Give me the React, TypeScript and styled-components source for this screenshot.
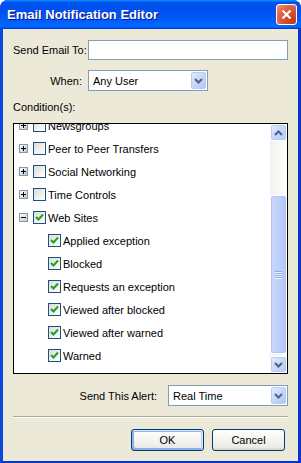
import React from 'react';
import styled, {createGlobalStyle} from 'styled-components';

const GlobalStyle = createGlobalStyle`
  html, body {
    margin: 0;
    padding: 0;
    background: #fff;
  }
  body {
    font-family: "Liberation Sans", Arial, sans-serif;
    font-size: 11px;
    color: #000;
  }
`

const Window = styled.div`
  width: 301px;
  height: 463px;
  display: flex;
  flex-direction: column;
  border-radius: 8px 8px 0 0;
  overflow: hidden;
  background: #0831d9;
`

const TitleBar = styled.div`
  height: 29px;
  flex: none;
  display: flex;
  align-items: center;
  justify-content: space-between;
  padding: 0 4px 0 7px;
  background: linear-gradient(180deg, #0997ff, #0053ee 8%, #0050ee 40%, #0066ff 88%, #0066ff 93%, #005bff 95%, #003dd7 96%, #003dd7);
`

const Title = styled.div`
  font-family: "Liberation Sans", Arial, sans-serif;
  font-weight: bold;
  font-size: 13px;
  color: #fff;
  text-shadow: 1px 1px #0f1089;
`

const CloseButton = styled.div`
  width: 21px;
  height: 21px;
  box-sizing: border-box;
  border: 1px solid #fff;
  border-radius: 3px;
  display: flex;
  align-items: center;
  justify-content: center;
  background: radial-gradient(circle at 85% 85%, #c23a14 0%, #d85532 45%, #e4704f 75%, #f09a80 100%);
`

const Frame = styled.div`
  flex: 1;
  display: flex;
  border: 3px solid #0736c8;
  border-top: none;
  border-left-color: #0b47dc;
`

const Body = styled.div`
  flex: 1;
  display: flex;
  flex-direction: column;
  background: #ece9d8;
  padding: 11px 10px 10px;
`

const FieldGrid = styled.div`
  display: grid;
  grid-template-columns: 69px 1fr;
  column-gap: 6px;
  row-gap: 10px;
  align-items: center;
`

const FieldLabel = styled.label<{$align?: 'left' | 'right'}>`
  text-align: ${p => p.$align ?? 'right'};
  white-space: nowrap;
`

const TextInput = styled.div`
  height: 20px;
  box-sizing: border-box;
  border: 1px solid #7f9db9;
  background: #fff;
`

const SelectBox = styled.div<{$width: number}>`
  width: ${p => p.$width}px;
  height: 21px;
  box-sizing: border-box;
  border: 1px solid #7f9db9;
  background: #fff;
  display: flex;
  align-items: center;
  padding: 1px;
`

const SelectValue = styled.span`
  flex: 1;
  padding-left: 3px;
`

const DropButton = styled.div`
  width: 15px;
  height: 17px;
  box-sizing: border-box;
  border: 1px solid #b9cbf3;
  border-radius: 2px;
  background: linear-gradient(135deg, #e2ebfe, #c1d3fb 60%, #b4c8f6);
  display: flex;
  align-items: center;
  justify-content: center;
`

const SectionLabel = styled.div`
  margin-top: 9px;
  height: 14px;
  line-height: 14px;
`

const TreeBox = styled.div`
  margin-top: 9px;
  height: 251px;
  box-sizing: border-box;
  border: 1px solid #000;
  background: #fff;
  display: flex;
`

const TreeViewport = styled.div`
  flex: 1;
  overflow: hidden;
`

const TreeList = styled.div<{$scroll: number}>`
  margin-top: -${p => p.$scroll}px;
`

const Row = styled.div<{$level: number}>`
  height: 23px;
  display: flex;
  align-items: center;
  padding-left: ${p => (p.$level === 0 ? 5 : 34)}px;
  white-space: nowrap;
`

const Expander = styled.div`
  width: 9px;
  height: 9px;
  box-sizing: border-box;
  border: 1px solid #7b98b5;
  background: linear-gradient(135deg, #fff, #c6c6be);
  display: flex;
  align-items: center;
  justify-content: center;
  margin-right: 5px;
`

const CheckBox = styled.div`
  width: 13px;
  height: 13px;
  flex: none;
  box-sizing: border-box;
  border: 1px solid #1c5180;
  background: linear-gradient(135deg, #dcdcd7, #fff);
  display: flex;
  align-items: center;
  justify-content: center;
  margin-right: 2px;
`

const RowText = styled.span`
  line-height: 14px;
`

const ScrollBar = styled.div`
  width: 17px;
  flex: none;
  display: flex;
  flex-direction: column;
  background: linear-gradient(90deg, #f3f1ec, #fefefb);
`

const ScrollButton = styled.div`
  height: 17px;
  box-sizing: border-box;
  border: 1px solid #fff;
  border-radius: 3px;
  background: linear-gradient(135deg, #e6eefc, #c7d7fc 50%, #b9ccf7);
  box-shadow: inset 0 0 0 1px #b7caf5;
  display: flex;
  align-items: center;
  justify-content: center;
`

const Track = styled.div`
  flex: 1;
  display: flex;
  flex-direction: column;
`

const Thumb = styled.div<{$offset: number; $size: number}>`
  margin-top: ${p => p.$offset}px;
  height: ${p => p.$size}px;
  box-sizing: border-box;
  border: 1px solid #fff;
  border-radius: 3px;
  background: linear-gradient(90deg, #cad9fd, #bccefa 60%, #b1c6f6);
  box-shadow: inset 0 0 0 1px #b2c5f2;
  display: flex;
  align-items: center;
  justify-content: center;
`

const AlertRow = styled.div`
  margin-top: 11px;
  display: flex;
  align-items: center;
  justify-content: flex-end;
  gap: 11px;
`

const Separator = styled.div`
  margin-top: 10px;
  border-top: 1px solid #aca899;
  border-bottom: 1px solid #fff;
`

const ButtonRow = styled.div`
  margin-top: 11px;
  display: flex;
  justify-content: flex-end;
  gap: 8px;
  padding-right: 3px;
`

const Button = styled.button<{$default?: boolean}>`
  width: 73px;
  height: 22px;
  box-sizing: border-box;
  border: 1px solid #003c74;
  border-radius: 3px;
  font-family: "Liberation Sans", Arial, sans-serif;
  font-size: 11px;
  color: #000;
  padding: 0;
  background: linear-gradient(180deg, #fff, #ecebe6 86%, #d6d0c5);
  box-shadow: ${p => p.$default
    ? 'inset -1px 1px #cee7ff, inset 1px 2px #98b8ea, inset -2px 2px #bcd4f6, inset 1px -1px #89ade4, inset 2px -2px #89ade4'
    : 'none'};
`

const Chevron = ({up}: {up?: boolean}) => (
  <svg width="9" height="6" viewBox="0 0 9 6">
    <polyline points={up ? '1,5 4.5,1.5 8,5' : '1,1 4.5,4.5 8,1'}
              fill="none" stroke="#4d6185" strokeWidth="2"/>
  </svg>
)

const Check = () => (
  <svg width="9" height="9" viewBox="0 0 9 9">
    <polyline points="1,4 3.5,6.5 8,1.5" fill="none" stroke="#21a121" strokeWidth="2"/>
  </svg>
)

const Grip = () => (
  <svg width="7" height="8" viewBox="0 0 7 8">
    {[0, 2, 4, 6].map(y => <rect key={y} x="0" y={y} width="7" height="1" fill="#8caaf0"/>)}
    {[1, 3, 5, 7].map(y => <rect key={y} x="0" y={y} width="7" height="1" fill="#eef3fe"/>)}
  </svg>
)

type Node = {label: string; checked: boolean; open?: boolean; children?: string[]}

const nodes: Node[] = [
  {label: 'Newsgroups', checked: false},
  {label: 'Peer to Peer Transfers', checked: false},
  {label: 'Social Networking', checked: false},
  {label: 'Time Controls', checked: false},
  {
    label: 'Web Sites', checked: true, open: true,
    children: ['Applied exception', 'Blocked', 'Requests an exception', 'Viewed after blocked', 'Viewed after warned', 'Warned']
  },
]

function Select({value, width}: {value: string; width: number}) {
  return (
    <SelectBox $width={width}>
      <SelectValue>{value}</SelectValue>
      <DropButton><Chevron/></DropButton>
    </SelectBox>
  )
}

export default function App() {
  return (
    <Window>
      <GlobalStyle/>
      <TitleBar>
        <Title>Email Notification Editor</Title>
        <CloseButton>
          <svg width="11" height="11" viewBox="0 0 11 11">
            <path d="M1.5 1.5 L9.5 9.5 M9.5 1.5 L1.5 9.5" stroke="#fff" strokeWidth="2.2"/>
          </svg>
        </CloseButton>
      </TitleBar>
      <Frame>
        <Body>
          <FieldGrid>
            <FieldLabel $align="left">Send Email To:</FieldLabel>
            <TextInput/>
            <FieldLabel>When:</FieldLabel>
            <Select value="Any User" width={120}/>
          </FieldGrid>
          <SectionLabel>Condition(s):</SectionLabel>
          <TreeBox>
            <TreeViewport>
              {/* list is scrolled down a little, so the first row is cut at the top */}
              <TreeList $scroll={10}>
                {nodes.map(node =>
                  <React.Fragment key={node.label}>
                    <Row $level={0}>
                      <Expander>
                        <svg width="7" height="7" viewBox="0 0 7 7">
                          <rect x="1" y="3" width="5" height="1" fill="#000"/>
                          {!node.open && <rect x="3" y="1" width="1" height="5" fill="#000"/>}
                        </svg>
                      </Expander>
                      <CheckBox>{node.checked && <Check/>}</CheckBox>
                      <RowText>{node.label}</RowText>
                    </Row>
                    {node.open && node.children?.map(child =>
                      <Row $level={1} key={child}>
                        <CheckBox><Check/></CheckBox>
                        <RowText>{child}</RowText>
                      </Row>
                    )}
                  </React.Fragment>
                )}
              </TreeList>
            </TreeViewport>
            <ScrollBar>
              <ScrollButton><Chevron up/></ScrollButton>
              <Track>
                <Thumb $offset={54} $size={159}><Grip/></Thumb>
              </Track>
              <ScrollButton><Chevron/></ScrollButton>
            </ScrollBar>
          </TreeBox>
          <AlertRow>
            <span>Send This Alert:</span>
            <Select value="Real Time" width={120}/>
          </AlertRow>
          <Separator/>
          <ButtonRow>
            <Button $default>OK</Button>
            <Button>Cancel</Button>
          </ButtonRow>
        </Body>
      </Frame>
    </Window>
  );
}
